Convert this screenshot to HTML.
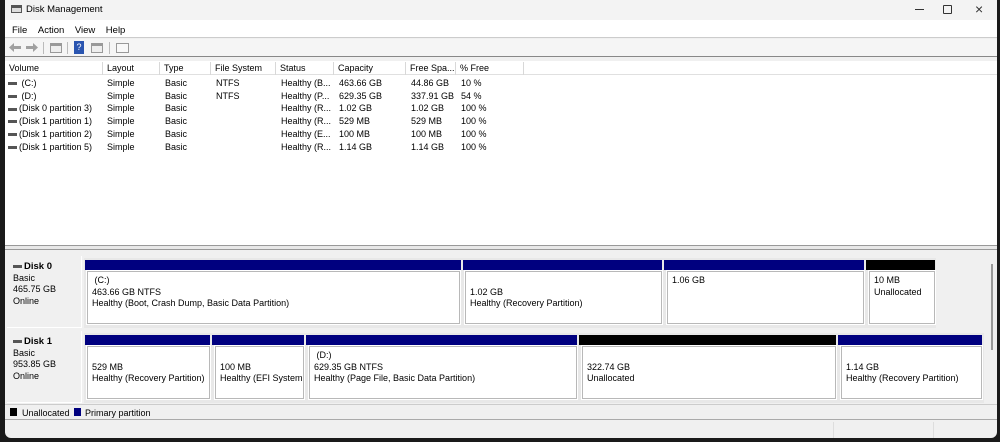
<!DOCTYPE html>
<html><head><style>
*{margin:0;padding:0;box-sizing:border-box}
body{width:1000px;height:442px;background:#1a1a1a;font-family:"Liberation Sans",sans-serif;font-size:9px;color:#000;position:relative;overflow:hidden}
.a{position:absolute}
.win{left:5px;top:0;width:992px;height:438px;background:#f0f0f0;border-radius:0 0 6px 6px;overflow:hidden}
.t{white-space:nowrap}
.hd{top:62px;height:13px;border-right:1px solid #d8d8d8;padding-left:4px;line-height:13px}
.bar{height:10px;background:#00007f}
.box{background:#fff;border:1px solid #b8b8b8;outline:1px solid #fff}
.pb{padding:3px 0 0 4px;line-height:11.5px}
.lbl{background:#f0f0f0;border-right:1px solid #fff;border-bottom:1px solid #fff;line-height:11.5px;padding:5px 0 0 6px}
.di{display:inline-block;width:9px;height:3px;background:#555;vertical-align:middle;margin-right:2px}
</style></head><body>
<div class="a win">
 <div class="a" style="left:0;top:0;width:992px;height:20px;background:#f3f3f3"></div>
 <div class="a" style="left:6px;top:5px;width:11px;height:8px;border:1px solid #555;border-top:3px solid #555;background:#ddd"></div>
 <div class="a t" style="left:21px;top:4px;font-size:9.5px">Disk Management</div>
 <div class="a" style="left:910px;top:9px;width:9px;height:1px;background:#333"></div>
 <div class="a" style="left:938px;top:5px;width:9px;height:9px;border:1px solid #333;border-radius:1px"></div>
 <div class="a t" style="left:970px;top:1px;font-size:14px;color:#333">×</div>
 <div class="a" style="left:0;top:20px;width:992px;height:18px;background:#fff;border-bottom:1px solid #ccc"></div>
 <div class="a t" style="left:7px;top:25px;font-size:9.5px">File&nbsp;&nbsp;&nbsp;&nbsp;Action&nbsp;&nbsp;&nbsp;&nbsp;View&nbsp;&nbsp;&nbsp;&nbsp;Help</div>
 <div class="a" style="left:0;top:39px;width:992px;height:18px;background:#f5f5f5;border-bottom:1px solid #888"></div>
 <svg class="a" style="left:3px;top:42px" width="32" height="11"><path d="M1 5.5 L6 1 V4 H13 V7 H6 V10 Z" fill="#a0a0a0"/><path d="M30 5.5 L25 1 V4 H18 V7 H25 V10 Z" fill="#a0a0a0"/></svg>
 <div class="a" style="left:38px;top:42px;width:1px;height:12px;background:#bbb"></div>
 <div class="a" style="left:45px;top:43px;width:12px;height:10px;border:1px solid #999;border-top:3px solid #999;background:#eee"></div>
 <div class="a" style="left:62px;top:42px;width:1px;height:12px;background:#bbb"></div>
 <div class="a" style="left:69px;top:41px;width:10px;height:13px;background:#2a55b0;color:#fff;font-size:9px;text-align:center;line-height:13px">?</div>
 <div class="a" style="left:86px;top:43px;width:12px;height:10px;border:1px solid #999;border-top:3px solid #999;background:#eee"></div>
 <div class="a" style="left:104px;top:42px;width:1px;height:12px;background:#bbb"></div>
 <div class="a" style="left:111px;top:43px;width:13px;height:10px;border:1px solid #999;background:#f8f8f8"></div>
 <div class="a" style="left:0;top:61px;width:992px;height:184px;background:#fff"></div>
 <div class="a" style="left:0;top:61px;width:992px;height:14px;border-bottom:1px solid #e0e0e0"></div>
 <div class="a hd t" style="left:0;width:98px">Volume</div>
 <div class="a hd t" style="left:98px;width:57px">Layout</div>
 <div class="a hd t" style="left:155px;width:51px">Type</div>
 <div class="a hd t" style="left:206px;width:65px">File System</div>
 <div class="a hd t" style="left:271px;width:58px">Status</div>
 <div class="a hd t" style="left:329px;width:72px">Capacity</div>
 <div class="a hd t" style="left:401px;width:50px">Free Spa...</div>
 <div class="a hd t" style="left:451px;width:68px">% Free</div>
 <div class="a t" style="left:3px;top:77px;line-height:12.7px">
  <div><span class="di"></span> (C:)</div><div><span class="di"></span> (D:)</div><div><span class="di"></span>(Disk 0 partition 3)</div><div><span class="di"></span>(Disk 1 partition 1)</div><div><span class="di"></span>(Disk 1 partition 2)</div><div><span class="di"></span>(Disk 1 partition 5)</div></div>
 <div class="a t" style="left:102px;top:77px;line-height:12.7px">Simple<br>Simple<br>Simple<br>Simple<br>Simple<br>Simple</div>
 <div class="a t" style="left:160px;top:77px;line-height:12.7px">Basic<br>Basic<br>Basic<br>Basic<br>Basic<br>Basic</div>
 <div class="a t" style="left:211px;top:77px;line-height:12.7px">NTFS<br>NTFS</div>
 <div class="a t" style="left:276px;top:77px;line-height:12.7px">Healthy (B...<br>Healthy (P...<br>Healthy (R...<br>Healthy (R...<br>Healthy (E...<br>Healthy (R...</div>
 <div class="a t" style="left:334px;top:77px;line-height:12.7px">463.66 GB<br>629.35 GB<br>1.02 GB<br>529 MB<br>100 MB<br>1.14 GB</div>
 <div class="a t" style="left:406px;top:77px;line-height:12.7px">44.86 GB<br>337.91 GB<br>1.02 GB<br>529 MB<br>100 MB<br>1.14 GB</div>
 <div class="a t" style="left:456px;top:77px;line-height:12.7px">10 %<br>54 %<br>100 %<br>100 %<br>100 %<br>100 %</div>
 <div class="a" style="left:0;top:245px;width:992px;height:5px;background:#e8e8e8;border-top:1px solid #999;border-bottom:1px solid #999"></div>
 <div class="a lbl t" style="left:2px;top:256px;width:75px;height:72px"><b style="font-size:9.5px"><span class="di"></span>Disk 0</b><br>Basic<br>465.75 GB<br>Online</div>
 <div class="a" style="left:79px;top:258px;width:852px;height:70px;background:#e8e8e8"></div>
 <div class="a bar" style="left:80px;top:260px;width:376px"></div>
 <div class="a box pb t" style="left:82px;top:271px;width:373px;height:53px">&nbsp;(C:)<br>463.66 GB NTFS<br>Healthy (Boot, Crash Dump, Basic Data Partition)</div>
 <div class="a bar" style="left:458px;top:260px;width:199px"></div>
 <div class="a box pb t" style="left:460px;top:271px;width:197px;height:53px"><br>1.02 GB<br>Healthy (Recovery Partition)</div>
 <div class="a bar" style="left:659px;top:260px;width:200px"></div>
 <div class="a box pb t" style="left:662px;top:271px;width:197px;height:53px">1.06 GB</div>
 <div class="a bar" style="left:861px;top:260px;width:69px;background:#000"></div>
 <div class="a box pb t" style="left:864px;top:271px;width:66px;height:53px">10 MB<br>Unallocated</div>
 <div class="a lbl t" style="left:2px;top:331px;width:75px;height:72px"><b style="font-size:9.5px"><span class="di"></span>Disk 1</b><br>Basic<br>953.85 GB<br>Online</div>
 <div class="a" style="left:79px;top:333px;width:900px;height:70px;background:#e8e8e8"></div>
 <div class="a bar" style="left:80px;top:335px;width:125px"></div>
 <div class="a box pb t" style="left:82px;top:346px;width:123px;height:53px;overflow:hidden"><br>529 MB<br>Healthy (Recovery Partition)</div>
 <div class="a bar" style="left:207px;top:335px;width:92px"></div>
 <div class="a box pb t" style="left:210px;top:346px;width:89px;height:53px;overflow:hidden"><br>100 MB<br>Healthy (EFI System I</div>
 <div class="a bar" style="left:301px;top:335px;width:271px"></div>
 <div class="a box pb t" style="left:304px;top:346px;width:268px;height:53px">&nbsp;(D:)<br>629.35 GB NTFS<br>Healthy (Page File, Basic Data Partition)</div>
 <div class="a bar" style="left:574px;top:335px;width:257px;background:#000"></div>
 <div class="a box pb t" style="left:577px;top:346px;width:254px;height:53px"><br>322.74 GB<br>Unallocated</div>
 <div class="a bar" style="left:833px;top:335px;width:144px"></div>
 <div class="a box pb t" style="left:836px;top:346px;width:141px;height:53px"><br>1.14 GB<br>Healthy (Recovery Partition)</div>
 <div class="a" style="left:986px;top:264px;width:2px;height:86px;background:#999"></div>
 <div class="a" style="left:0;top:404px;width:992px;height:16px;border-top:1px solid #ccc;border-bottom:1px solid #aaa"></div>
 <div class="a" style="left:5px;top:408px;width:7px;height:8px;background:#000"></div>
 <div class="a t" style="left:17px;top:408px">Unallocated</div>
 <div class="a" style="left:69px;top:408px;width:7px;height:8px;background:#00007f"></div>
 <div class="a t" style="left:80px;top:408px">Primary partition</div>
 <div class="a" style="left:828px;top:422px;width:1px;height:16px;background:#ddd"></div>
 <div class="a" style="left:928px;top:422px;width:1px;height:16px;background:#ddd"></div>
</div>
</body></html>
